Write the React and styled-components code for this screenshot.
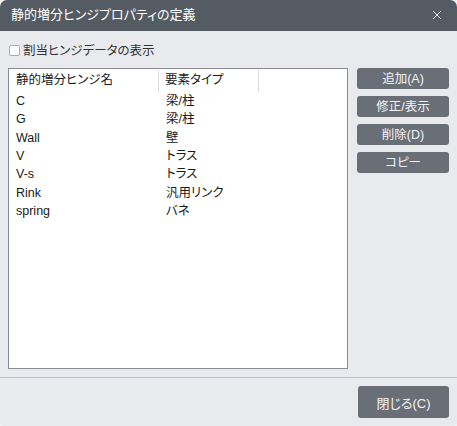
import styled, { createGlobalStyle } from "styled-components";

const GlobalStyle = createGlobalStyle`
  html, body {
    margin: 0;
    padding: 0;
    background: #f2f2f2;
  }
  * {
    box-sizing: border-box;
  }
`;

const hinges = [
  { name: "C", type: "梁/柱" },
  { name: "G", type: "梁/柱" },
  { name: "Wall", type: "壁" },
  { name: "V", type: "トラス" },
  { name: "V-s", type: "トラス" },
  { name: "Rink", type: "汎用リンク" },
  { name: "spring", type: "バネ" },
];

const actions = ["追加(A)", "修正/表示", "削除(D)", "コピー"];

const CloseIcon = () => (
  <svg width="10" height="10" viewBox="0 0 10 10">
    <path d="M1 1L9 9M9 1L1 9" stroke="#dfe2e5" strokeWidth="1" fill="none" />
  </svg>
);

const App = () => {
  return (
    <>
      <GlobalStyle />
      <Window>
        <TitleBar>
          <Title>静的増分ヒンジプロパティの定義</Title>
          <CloseButton>
            <CloseIcon />
          </CloseButton>
        </TitleBar>
        <Body>
          <CheckRow>
            <CheckBox />
            <CheckLabel>割当ヒンジデータの表示</CheckLabel>
          </CheckRow>
          <Main>
            <ListBox>
              <HeaderRow>
                <HeadCell $width={150}>静的増分ヒンジ名</HeadCell>
                <HeadCell $width={100}>要素タイプ</HeadCell>
              </HeaderRow>
              {hinges.map((h) => (
                <Row key={h.name}>
                  <Cell $width={150}>{h.name}</Cell>
                  <Cell $width={100}>{h.type}</Cell>
                </Row>
              ))}
            </ListBox>
            <ButtonColumn>
              {actions.map((a) => (
                <ActionButton key={a}>{a}</ActionButton>
              ))}
            </ButtonColumn>
          </Main>
        </Body>
        <Footer>
          <FooterButton>閉じる(C)</FooterButton>
        </Footer>
      </Window>
    </>
  );
};

export default App;

const fontStack = `"Liberation Sans", "Noto Sans CJK JP", sans-serif`;

const Window = styled.div`
  width: 457px;
  height: 426px;
  display: flex;
  flex-direction: column;
  background: #e9eaee;
  border-radius: 7px 7px 4px 4px;
  overflow: hidden;
  font-family: ${fontStack};
  font-feature-settings: "palt";
`;

const TitleBar = styled.div`
  height: 31px;
  flex: none;
  display: flex;
  align-items: center;
  justify-content: space-between;
  padding: 0 11px 0 11px;
  background: #555b63;
`;

const Title = styled.div`
  color: #ffffff;
  font-size: 13px;
  line-height: 20px;
  padding-bottom: 1px;
`;

const CloseButton = styled.div`
  width: 12px;
  height: 12px;
  display: flex;
  align-items: center;
  justify-content: center;
  margin-right: 3px;
  margin-bottom: 1px;
`;

const Body = styled.div`
  flex: 1;
  display: flex;
  flex-direction: column;
  padding: 0 8px 0 8px;
`;

const CheckRow = styled.div`
  display: flex;
  align-items: center;
  gap: 3px;
  height: 37px;
  padding: 2px 0 0 1px;
`;

const CheckBox = styled.div`
  width: 11px;
  height: 11px;
  border: 1px solid #a9acb2;
  border-radius: 2px;
  background: #ffffff;
`;

const CheckLabel = styled.span`
  font-size: 12.5px;
  color: #333333;
  line-height: 18px;
`;

const Main = styled.div`
  display: flex;
  gap: 9px;
`;

const ListBox = styled.div`
  width: 341px;
  height: 301px;
  background: #ffffff;
  border: 1px solid #8b8c93;
  padding-top: 1px;
`;

const HeaderRow = styled.div`
  display: flex;
  height: 22px;
`;

const HeadCell = styled.div`
  width: ${(p) => p.$width}px;
  padding-left: 7px;
  font-size: 12.5px;
  line-height: 21px;
  color: #1a1a1a;
  border-right: 1px solid #dcdcdc;
  &:last-child {
    padding-left: 6px;
  }
`;

const Row = styled.div`
  display: flex;
  height: 18.33px;
`;

const Cell = styled.div`
  width: ${(p) => p.$width}px;
  padding-left: 7px;
  font-size: 12.5px;
  line-height: 18px;
  color: #1a1a1a;
  white-space: nowrap;
  &:last-child {
    padding-left: 7px;
  }
`;

const ButtonColumn = styled.div`
  display: flex;
  flex-direction: column;
  gap: 7px;
`;

const ActionButton = styled.div`
  width: 92px;
  height: 21px;
  display: flex;
  align-items: center;
  justify-content: center;
  background: #6a6f77;
  border-radius: 3px;
  color: #f2f3f5;
  font-size: 12.5px;
  line-height: 18px;
`;

const Footer = styled.div`
  flex: none;
  height: 49px;
  border-top: 1px solid #bcc3c5;
  display: flex;
  justify-content: flex-end;
  align-items: flex-start;
  padding: 8px 8px 0 0;
`;

const FooterButton = styled.div`
  width: 91px;
  height: 32px;
  display: flex;
  align-items: center;
  justify-content: center;
  background: #6a6f77;
  border-radius: 3px;
  color: #f2f3f5;
  font-size: 13px;
`;
